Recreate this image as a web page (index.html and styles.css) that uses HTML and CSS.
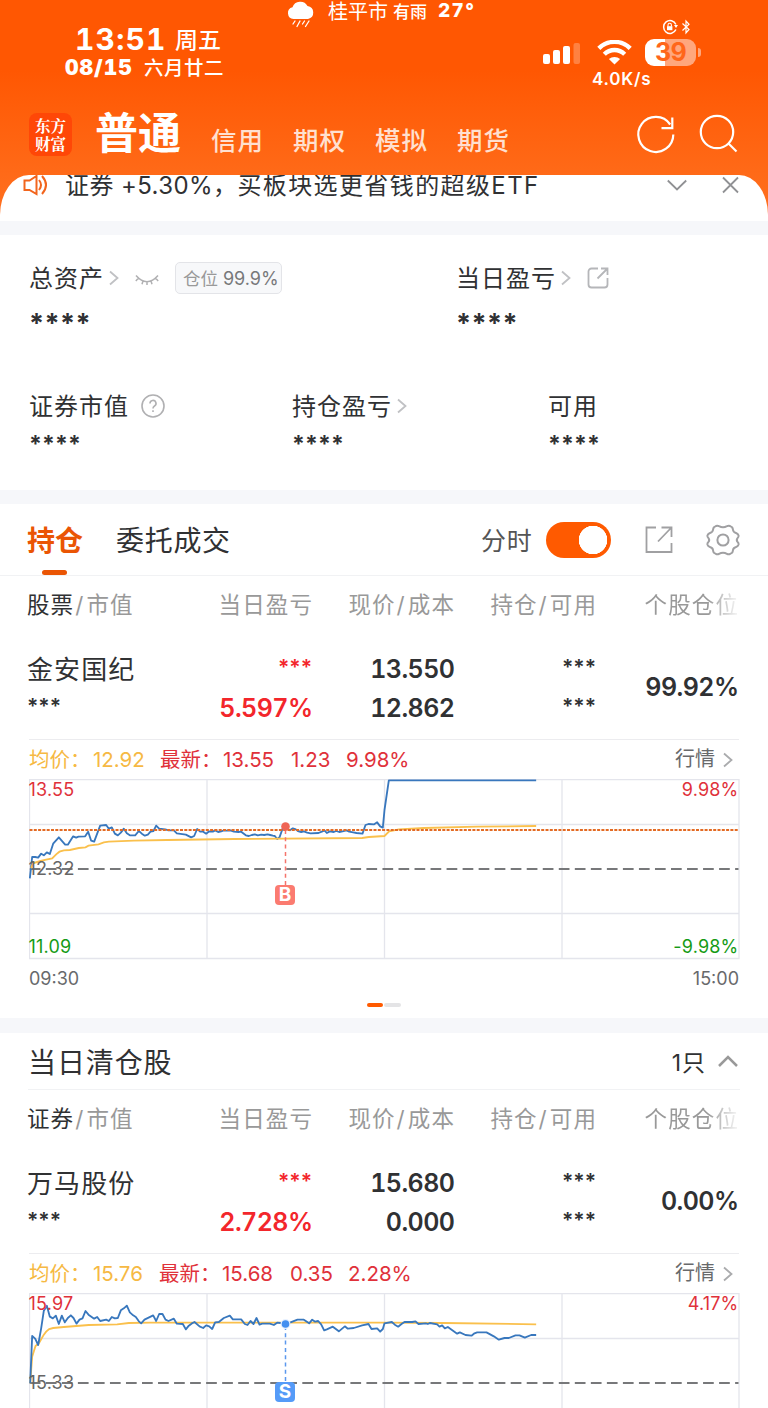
FILE: index.html
```html
<!DOCTYPE html>
<html lang="zh-CN">
<head>
<meta charset="utf-8">
<title>普通交易 - 持仓</title>
<link rel="stylesheet" href="styles.css">
</head>
<body>
<div class="app">
  <header class="header">
    <div class="status">
      <div class="clock">
        <div class="clock-row"><span class="time">13:51</span><span class="weekday">周五</span></div>
        <div class="date-row"><span class="date">08/15</span><span class="lunar">六月廿二</span></div>
      </div>
      <div class="weather">
        <svg class="cloud" width="28" height="28" viewBox="0 0 28 28"><path d="M6.500 19a6 6 0 0 1-1-11.800A8.200 8.200 0 0 1 20.500 6A6.600 6.600 0 0 1 21 19z" fill="#fff"/><path d="M8 21l-2 3M13 21l-3 5.500M17.500 21l-2 3M22 21l-3.500 5.500" stroke="#fff" stroke-width="1.300" stroke-linecap="round"/></svg>
        <span class="city">桂平市</span><span class="rain">有雨</span><span class="temp">27°</span>
      </div>
      <div class="signals">
        <div class="mini">
          <svg width="16" height="16" viewBox="0 0 16 16" fill="none" stroke="#fff" stroke-width="1.500"><path d="M13.900 5.500A6.400 6.400 0 1 0 13.900 10.500"/><path d="M12 6h4l-2 3z" fill="#fff" stroke="none"/><rect x="5" y="7.200" width="5.400" height="4" fill="#fff" stroke="none"/><path d="M6 7.500V6a1.700 1.700 0 0 1 3.400 0v1.500" stroke-width="1.100"/></svg>
          <svg width="10" height="16" viewBox="0 0 10 16" fill="none" stroke="#fff" stroke-width="1.200"><path d="M1.500 4.500l6.500 6L5 14V2l3 3.300-6.500 6.200"/></svg>
        </div>
        <div class="signal-row">
          <svg class="bars" width="38" height="22" viewBox="0 0 38 22" fill="#fff"><rect x="0" y="11" width="7" height="10" rx="2"/><rect x="10" y="7" width="7" height="14" rx="2"/><rect x="20" y="3" width="7" height="18" rx="2"/><rect x="30.500" y="0" width="6.500" height="21" rx="2" opacity=".25"/></svg>
          <svg class="wifi" width="35" height="25" viewBox="0 0 35 25"><g fill="none" stroke="#fff" stroke-width="4.400"><path d="M1.800 8.300a22.500 22.500 0 0 1 31.400 0"/><path d="M7.300 14.200a14.500 14.500 0 0 1 20.400 0"/></g><path d="M17.500 24.500l-5.600-5.400a8.200 8.200 0 0 1 11.200 0z" fill="#fff"/></svg>
          <div class="battery"><span class="battery-num">39</span></div><i class="battery-tip"></i>
        </div>
        <div class="speed">4.0K/s</div>
      </div>
    </div>
    <nav class="nav">
      <div class="logo"><span>东方</span><span>财富</span></div>
      <span class="nav-on">普通</span>
      <span class="nav-item">信用</span><span class="nav-item">期权</span><span class="nav-item">模拟</span><span class="nav-item">期货</span>
      <svg class="nav-icons" width="104" height="44" viewBox="635 112 104 44" fill="none" stroke="#fff" stroke-width="2.200"><path d="M670.200 124.500A17.500 17.500 0 1 0 673.300 134.500"/><path d="M672.300 117.500v10.700H661.500"/><circle cx="717" cy="132" r="16.200"/><path d="M728.500 143.500l8 8"/></svg>
    </nav>
  </header>

  <div class="notice-wrap"><div class="notice">
    <svg class="speaker" width="26" height="24" viewBox="0 0 26 24" fill="none" stroke="#f2651d" stroke-width="2"><path d="M1.500 7.500h5L13.500 3v18l-7-4h-5z"/><path d="M16 7q4 5 0 10M19 3q8 9 0 18"/></svg>
    <span class="notice-text">证券 +5.30%，<span class="notice-rest">买板块选更省钱的超级ETF</span></span>
    <svg class="notice-icons" width="74" height="18" viewBox="0 0 74 18" fill="none" stroke="#909194" stroke-width="1.800"><path d="M.8 4.500l9.200 9 9.200-9M56 1.500l15 15M71 1.500l-15 15"/></svg>
  </div></div>
  <div class="strip"></div>

  <section class="assets">
    <div class="asset total">
      <div class="label"><span class="label-text">总资产</span><svg class="chev" width="10" height="16" viewBox="0 0 10 16"><path d="M1 1.500l7.500 6.500L1 14.500"/></svg>
        <svg class="eye" width="24" height="14" viewBox="0 0 24 14"><path d="M1 1.500Q12 14 23 1.500M3.500 4L.8 7M8 7L7 10.300M12 7.800V11M16 7l1 3.300M20.500 4l2.700 3"/></svg>
        <span class="tag"><span class="tag-name">仓位</span> <span class="tag-num">99.9%</span></span></div>
      <div class="stars big">****</div>
    </div>
    <div class="asset day">
      <div class="label"><span class="label-text">当日盈亏</span><svg class="chev" width="10" height="16" viewBox="0 0 10 16"><path d="M1 1.500l7.500 6.500L1 14.500"/></svg>
        <svg class="share" width="22" height="22" viewBox="0 0 22 22"><path d="M11 1.500H4.500a3 3 0 0 0-3 3v13a3 3 0 0 0 3 3h13a3 3 0 0 0 3-3V11M10.500 11.500L20 2M14 1.500h6.500V8"/></svg></div>
      <div class="stars big">****</div>
    </div>
    <div class="asset"><div class="label"><span class="label-text">证券市值</span><svg class="help" width="24" height="24" viewBox="0 0 24 24"><circle cx="12" cy="12" r="11"/><path d="M9 9.500a3 3 0 1 1 4.500 2.500q-1.500 1-1.500 2.500M12 16.300v1.700"/></svg></div><div class="stars">****</div></div>
    <div class="asset"><div class="label"><span class="label-text">持仓盈亏</span><svg class="chev" width="10" height="16" viewBox="0 0 10 16"><path d="M1 1.500l7.500 6.500L1 14.500"/></svg></div><div class="stars">****</div></div>
    <div class="asset"><div class="label"><span class="label-text">可用</span></div><div class="stars">****</div></div>
  </section>
  <div class="strip"></div>

  <div class="tabs">
    <span class="tab tab-on">持仓</span><span class="tab">委托成交</span>
    <span class="switch-label">分时</span><span class="switch"></span>
    <svg class="tab-share" width="28" height="28" viewBox="0 0 28 28"><path d="M11 1.500H1.500V26h25V17M13 15.500L26 2M16.500 1.500h10V11"/></svg>
    <svg class="gear" width="34" height="34" viewBox="-17 -17 34 34"><path d="M-4 -13.800Q0 -11.500 4 -13.800Q5.500 -14.800 7 -14L9 -12.800Q9.800 -12 9.900 -10.500Q10.200 -7.800 13 -7Q15 -6.300 15.600 -4.500Q15.800 -3 14.600 -2Q13 0 14.600 2Q15.800 3 15.600 4.500Q15 6.300 13 7Q10.200 7.800 9.900 10.500Q9.800 12 9 12.800L7 14Q5.500 14.800 4 13.800Q0 11.500 -4 13.800Q-5.500 14.800 -7 14L-9 12.800Q-9.800 12 -9.900 10.500Q-10.200 7.800 -13 7Q-15 6.300 -15.600 4.500Q-15.800 3 -14.600 2Q-13 0 -14.600 -2Q-15.800 -3 -15.600 -4.500Q-15 -6.300 -13 -7Q-10.200 -7.800 -9.900 -10.500Q-9.800 -12 -9 -12.800L-7 -14Q-5.500 -14.800 -4 -13.800z"/><circle r="5.600"/></svg>
  </div>

  <section class="position">
    <div class="thead"><span><b>股票</b><i>/</i>市值</span><span>当日盈亏</span><span>现价<i>/</i>成本</span><span>持仓<i>/</i>可用</span><span class="fade">个股仓位</span></div>
    <div class="holding">
      <div class="cell first"><span class="name">金安国纪</span><span class="hid">***</span></div>
      <div class="cell red"><span class="hid">***</span><span class="num">5.597%</span></div>
      <div class="cell"><span class="num">13.550</span><span class="num">12.862</span></div>
      <div class="cell"><span class="hid">***</span><span class="hid">***</span></div>
      <div class="cell single"><span class="num">99.92%</span></div>
    </div>
    <div class="quote"><span class="avg">均价：</span><span class="avg q1">12.92</span><span class="q2">最新：</span><span class="q3">13.55</span><span class="q4">1.23</span><span class="q5">9.98%</span><span class="more">行情</span><svg class="chev" width="10" height="16" viewBox="0 0 10 16"><path d="M1 1.500l7.500 6.500L1 14.500"/></svg></div>
    <div class="chart">
      <svg class="plot" width="711" height="181" viewBox="28.500 779 711 181">
        <path class="grid" d="M29 779.500H738.500V958.500H29zM29 824.500H738.500M29 913.500H738.500M206.500 779.500V958.500M384 779.500V958.500M561.500 779.500V958.500"/>
        <path class="mid" d="M29.300 869H738"/>
        <g transform="translate(0 735) scale(.33333)">
          <path class="price" d="M88 430L95 366H104L113 368 122 356 130 361 139 352 148 357 158 326 175 307 194 329H202L218 304 227 308 234 305 254 304 263 290 272 317 281 320 299 272 317 270 325 281 334 277 343 296 352 301 361 293 370 281 379 295 388 301H404L415 288 424 296 433 302 442 299 450 290 459 288 467 272 476 281 494 283 504 286H520L529 295 556 299 572 307 581 303 590 282 599 290H608L617 296 626 289 637 290 644 286 653 291 662 289 670 286 679 287 690 286 700 290 714 291 722 290 736 301 745 303 754 300 763 298 772 301 782 299 791 300 801 298 809 300 817 302 823 303 830 312 837 307 848 276 855 272 863 283 868 286 877 280 886 283 892 288 902 291 910 289 920 293 930 295 954 294 964 290 972 286 979 294 988 289 1000 291 1007 288 1016 291 1026 289 1038 286 1046 290 1058 292 1068 294 1086 296 1095 270 1104 267 1121 268 1130 262 1139 274 1147 278 1152 225 1165 136H1607"/>
          <path class="average" d="M92 400L97 385 120 378 137 374 155 370 167 358 177 350 190 346 208 345 235 339 255 337 264 332 294 328 310 322 325 320 400 317 500 315 700 312 1085 309 1105 306 1152 303 1166 289 1195 283 1270 279 1430 275 1607 273"/>
        </g>
        <path class="cost" d="M29 830H738"/>
        <path d="M285 830V886" stroke="#f5746b" stroke-width="1.500" stroke-dasharray="4 3.300"/>
        <circle cx="285" cy="826.500" r="4.300" fill="#ef6454"/>
      </svg>
      <span class="axis tl">13.55</span><span class="axis tr">9.98%</span><span class="axis ml">12.32</span><span class="axis bl">11.09</span><span class="axis br">-9.98%</span>
      <span class="mark buy">B</span>
    </div>
    <div class="hours"><span>09:30</span><span>15:00</span></div>
    <div class="pager"><i class="on"></i><i></i></div>
  </section>
  <div class="strip strip-low"></div>

  <section class="position closed">
    <div class="closed-title"><span class="title">当日清仓股</span><span class="count">1只</span><svg width="20" height="14" viewBox="0 0 20 14"><path d="M1 12L10 3l9 9" fill="none" stroke="#999" stroke-width="2.500"/></svg></div>
    <div class="thead"><span><b>证券</b><i>/</i>市值</span><span>当日盈亏</span><span>现价<i>/</i>成本</span><span>持仓<i>/</i>可用</span><span class="fade">个股仓位</span></div>
    <div class="holding">
      <div class="cell first"><span class="name">万马股份</span><span class="hid">***</span></div>
      <div class="cell red"><span class="hid">***</span><span class="num">2.728%</span></div>
      <div class="cell"><span class="num">15.680</span><span class="num">0.000</span></div>
      <div class="cell"><span class="hid">***</span><span class="hid">***</span></div>
      <div class="cell single"><span class="num">0.00%</span></div>
    </div>
    <div class="quote"><span class="avg">均价：</span><span class="avg q1">15.76</span><span class="q2">最新：</span><span class="q3">15.68</span><span class="q4">0.35</span><span class="q5">2.28%</span><span class="more">行情</span><svg class="chev" width="10" height="16" viewBox="0 0 10 16"><path d="M1 1.500l7.500 6.500L1 14.500"/></svg></div>
    <div class="chart">
      <svg class="plot" width="711" height="181" viewBox="28.500 1293 711 181">
        <path class="grid" d="M29 1293.500H738.500V1472.500H29zM29 1338.500H738.500M206.500 1293.500V1472.500M384 1293.500V1472.500M561.500 1293.500V1472.500"/>
        <path class="mid" d="M29.300 1383H738"/>
        <g transform="translate(0 1250) scale(.33333)">
          <path class="average" d="M89 400L95 320 105 288 115 280 130 254 137 245 146 237 158 234 190 231 265 225 350 223 385 219 450 218H1152L1330 219 1607 223"/>
          <path class="price" d="M89 400L95 258 104 266 113 285 122 235 130 182 139 167 148 200 157 205 166 197 175 222 184 197 193 217 202 204 211 196 219 204 228 221 237 209 246 205 255 183 264 194 281 206 290 201 299 213 317 209 325 213 334 201 343 205 352 204 361 181 370 175 379 167 388 187 398 196 406 201 415 214 422 220 432 209 458 196 467 213 476 192H486L495 209 504 213 520 206 529 221 547 222 556 238 565 227 573 221 582 216 597 229 608 234 617 226 626 229 635 237 644 217 655 216 670 204 688 197 697 208H722L733 222 741 225 750 213 759 222 768 204 777 224 785 221H808L820 225 830 218 840 219 855 221 870 217 891 209H910L926 220 935 209 944 215 953 213 962 223 971 241 979 238 997 230 1015 244 1033 229 1042 236 1060 234 1085 226 1104 222 1113 237 1130 235 1139 245 1147 237 1152 220 1174 216 1183 224 1193 230 1203 222 1212 216H1235L1245 214 1254 222 1276 220 1282 222 1288 219 1310 223 1317 230 1325 226 1333 235 1342 231 1370 251 1378 247 1395 255 1413 257 1422 250 1430 247H1458L1480 259 1495 269 1512 264H1525L1545 256H1557L1573 263 1592 255H1607"/>
        </g>
        <path d="M285 1326V1384" stroke="#5b98ed" stroke-width="1.500" stroke-dasharray="4 3.300"/>
        <circle cx="285" cy="1324" r="5" fill="#e6f0ff"/><circle cx="285" cy="1324" r="3.800" fill="#438ff0"/>
      </svg>
      <span class="axis tl">15.97</span><span class="axis tr">4.17%</span><span class="axis ml">15.33</span>
      <span class="mark sell">S</span>
    </div>
  </section>
</div>
</body>
</html>
```

FILE: styles.css
```css
* { box-sizing: border-box; }
body { margin: 0; background: #fff; }
svg { display: block; flex: none; }
.app {
  width: 768px; height: 1408px; overflow: hidden; background: #fff;
  font-family: Inter, "Noto Sans CJK SC", sans-serif; font-weight: 400;
  color: #303133; white-space: nowrap;
}
span { flex: none; }
.time, .date, .num, .temp { font-variant-numeric: tabular-nums; }

/* Header */
.header { height: 175px; background: linear-gradient(#ff5702 0, #ff5702 70px, #ff6a18 175px); color: #fff; }
.status { height: 102px; display: grid; grid-template-columns: 287px 253px 1fr; }
.clock { padding: 24px 0 0 65px; }
.clock-row { display: flex; height: 31px; line-height: 31px; padding-left: 10px; }
.time { font-size: 30px; font-weight: 700; width: 100px; letter-spacing: 1.2px; }
.weekday { font-size: 23px; font-weight: 500; padding-top: 1px; }
.date-row { display: flex; height: 25px; line-height: 25px; }
.date { font-size: 21px; font-weight: 900; width: 79px; letter-spacing: 1px; }
.lunar { font-size: 19.500px; padding-top: 1px; letter-spacing: .5px; font-weight: 500; }
.weather { display: flex; height: 24px; line-height: 24px; }
.city { font-size: 20px; margin-left: 13px; width: 65px; }
.rain { font-size: 17px; width: 45px; font-weight: 500; }
.temp { font-size: 19px; font-weight: 800; letter-spacing: 1.300px; line-height: 22px; }
.signals { padding: 19px 0 0 3px; }
.mini { display: flex; gap: 3px; padding-left: 119px; height: 19px; }
.signal-row { display: flex; height: 28px; align-items: center; }
.bars { margin-top: 3px; }
.wifi { margin-left: 16px; }
.battery { margin-left: 13px; width: 51px; height: 27px; border-radius: 9px; background: linear-gradient(90deg, #fff 20px, #ffa77d 20px); text-align: center; line-height: 27px; }
.battery-num { font-size: 25px; font-weight: 700; color: #ff661a; letter-spacing: -.6px; }
.battery-tip { width: 3px; height: 9px; margin-left: 2px; border-radius: 0 4px 4px 0; background: #ffa77d; }
.speed { font-size: 17px; font-weight: 600; line-height: 24px; padding-left: 49px; padding-top: 1px; letter-spacing: .8px; }
.nav { display: flex; height: 73px; padding: 10px 0 0 29px; }
.logo { width: 43px; height: 43px; margin-top: 1px; border-radius: 8px; background: #ff4707; display: flex; flex-direction: column; align-items: center; padding-top: 3px; font: 700 15.500px/18px "Noto Serif CJK SC", "Noto Sans CJK SC", serif; }
.nav-on { font-size: 43px; font-weight: 700; line-height: 42px; margin-left: 23px; width: 116px; }
.nav-item { font-size: 25.500px; line-height: 44px; padding-top: 7px; width: 82px; letter-spacing: .9px; color: #ffe0d0; font-weight: 500; }
.nav-icons { margin-left: 96px; }

/* Notice */
.notice-wrap { height: 46px; background: linear-gradient(#ff6a18, #ff7020 40px, #fff 40px); }
.notice { height: 46px; background: #fff; border-radius: 29px 29px 0 0 / 40px 40px 0 0; overflow: hidden; display: flex; }
.speaker { margin: -2px 0 0 23px; }
.notice-text { margin: -5px 0 0 16px; font-size: 24px; line-height: 32px; width: 602px; letter-spacing: .4px; }
.notice-rest { letter-spacing: 1.400px; }
.notice-icons { margin-top: 1px; }
.strip { height: 14px; background: #f6f7fa; }

/* Assets */
.assets { height: 255px; padding: 27px 0 0 29px; display: grid; grid-template-columns: 263px 164px 92px 1fr; grid-template-rows: 128px 1fr; }
.total { grid-column: 1 / 3; }
.day { grid-column: 3 / 5; }
.asset:last-child { grid-column: 4; }
.label { height: 32px; line-height: 32px; font-size: 24px; letter-spacing: 1px; display: flex; align-items: center; }
.label-text { padding-top: 2px; }
.chev { fill: none; stroke: #c0c1c4; stroke-width: 1.800; }
.label .chev { margin-left: 5px; }
.eye { margin-left: 16px; margin-top: 5px; fill: none; stroke: #b0b0b2; stroke-width: 1.500; }
.tag { margin-left: 16px; width: 107px; height: 32px; line-height: 31px; border: 1px solid #e3e4e8; border-radius: 5px; background: #f7f8fa; padding-left: 7px; font-size: 17.500px; letter-spacing: 0; color: #999; }
.tag-num { color: #77787a; font-size: 18px; }
.share { margin-left: 16px; fill: none; stroke: #b5b6b9; stroke-width: 1.800; }
.help { margin-left: 12px; fill: none; stroke: #b0b0b2; stroke-width: 1.600; }
.stars { font-size: 23px; font-weight: 700; line-height: 30px; padding-top: 7px; letter-spacing: .1px; }
.stars.big { font-size: 27px; line-height: 32px; padding-top: 14px; letter-spacing: .4px; }

/* Tabs */
.tabs { display: flex; height: 72px; border-bottom: 1px solid #f1f2f4; padding-left: 27px; }
.tab { font-size: 28px; line-height: 75px; letter-spacing: .7px; }
.tab-on { position: relative; width: 89px; color: #ea5504; font-weight: 700; letter-spacing: 0; }
.tab-on::after { content: ""; position: absolute; left: 15px; top: 66px; width: 25px; height: 5px; border-radius: 2.500px; background: #ea5504; }
.switch-label { font-size: 25px; line-height: 74px; margin-left: auto; width: 65px; letter-spacing: .8px; color: #555; }
.switch { width: 65px; height: 36px; margin: 18px 34px 0 0; border-radius: 18px; background: radial-gradient(circle at 47px 18px, #fff 14px, #ff5a00 14.500px); }
.tab-share { margin: 22px 33px 0 0; fill: none; stroke: #a0a0a2; stroke-width: 1.800; }
.gear { margin: 19px 28px 0 0; fill: none; stroke: #a0a0a2; stroke-width: 2; }

/* Position table */
.thead, .holding { display: grid; grid-template-columns: 143px repeat(4, 142px); padding-left: 27px; text-align: right; }
.thead { height: 59px; line-height: 58px; font-size: 22.500px; letter-spacing: 1.100px; color: #999; padding-left: 28px; }
.thead b { font-weight: 400; color: #303133; }
.thead i { font-style: normal; padding: 0 2px 0 1px; }
.thead span:first-child { text-align: left; margin-left: -1px; }
.fade { -webkit-mask-image: linear-gradient(90deg, #000 110px, transparent 144px); mask-image: linear-gradient(90deg, #000 110px, transparent 144px); }
.holding { height: 104px; padding-top: 14px; }
.cell { display: flex; flex-direction: column; align-items: flex-end; }
.cell.first { align-items: flex-start; }
.cell span { height: 39px; line-height: 40px; }
.num { font-size: 25px; font-weight: 600; letter-spacing: -.55px; margin-right: -.500px; }
.cell .name { font-size: 26px; letter-spacing: 1.100px; line-height: 41px; }
.cell .hid { font-size: 21px; font-weight: 600; line-height: 38px; }
.red { color: #f3262b; }
.single { padding-top: 18px; }
.quote { height: 40px; line-height: 39px; margin: 0 29px; border-top: 1px solid #ececef; display: flex; align-items: center; font-size: 20.500px; color: #e0313a; }
.quote .avg { color: #f6b943; }
.quote .avg:first-child { width: 64px; }
.q1 { width: 67px; } .q2 { width: 63px; } .q3 { width: 68px; } .q4 { width: 55px; }
.closed .q1 { width: 66px; } .closed .q4 { width: 58px; }
.more { margin-left: auto; margin-right: 8px; color: #68696b; font-size: 20px; }
.quote .chev { margin-right: 6px; stroke: #aaabad; }
.chart { position: relative; width: 711px; height: 180px; margin-left: 28.500px; }
.grid { fill: none; stroke: #e4e5ec; stroke-width: 1.300; }
.price { fill: none; stroke: #3877bd; stroke-width: 5.500; stroke-linejoin: round; }
.average { fill: none; stroke: #fac04c; stroke-width: 5.500; }
.mid { stroke: #77787a; stroke-width: 1.900; stroke-dasharray: 10.700 5.330; }
.cost { stroke: #e36b24; stroke-width: 2; stroke-dasharray: 3 1.300; }
.axis { position: absolute; font-size: 18px; line-height: 22px; color: #666; letter-spacing: .2px; }
.tl, .tr { top: 0; color: #e0313a; }
.tl, .ml, .bl { left: 0; }
.tr, .br { right: 1px; }
.ml { top: 79px; }
.bl, .br { top: 157px; color: #159b16; }
.mark { position: absolute; left: 246.500px; width: 20px; height: 20px; border-radius: 4px; color: #fff; text-align: center; font-size: 19px; line-height: 20px; font-weight: 700; }
.buy { top: 106px; background: #fb7b70; }
.sell { top: 89px; background: #559bf8; }
.hours { display: flex; justify-content: space-between; padding: 8px 29px 0; font-size: 18px; line-height: 24px; color: #68696b; }
.pager { display: flex; gap: 1px; padding: 12px 0 0 367px; height: 27px; }
.pager i { width: 17px; height: 4px; border-radius: 2px; background: #e4e4e6; }
.pager .on { background: #ff5a00; width: 16px; }
.strip-low { height: 15px; }
.closed-title { display: flex; align-items: center; height: 57px; margin: 0 28px; border-bottom: 1px solid #f1f2f4; }
.title { font-size: 28px; letter-spacing: .9px; }
.count { margin-left: auto; margin-right: 12px; font-size: 23px; letter-spacing: 1px; }
.closed-title svg { margin-right: 2px; }
```
